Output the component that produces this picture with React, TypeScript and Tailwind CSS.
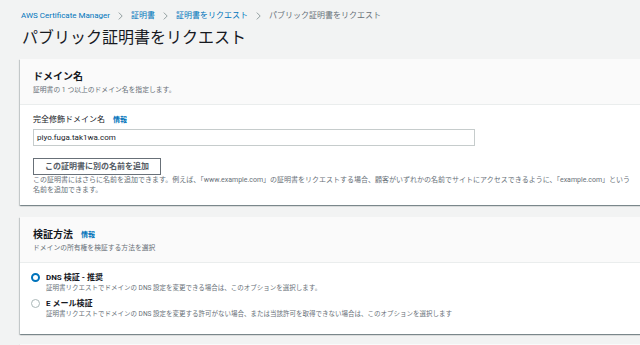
const font = { fontFamily: '"Roboto", "Noto Sans CJK JP", sans-serif' };

const cardShadow =
  "shadow-[0_1px_1px_0_rgba(0,28,36,0.3),1px_1px_1px_0_rgba(0,28,36,0.15),-1px_1px_1px_0_rgba(0,28,36,0.15)]";

function Chevron() {
  return (
    <svg width="5" height="8" viewBox="0 0 5 8" className="shrink-0">
      <path d="M0.8 0.6 L4.2 4 L0.8 7.4" fill="none" stroke="#879596" strokeWidth="0.9" />
    </svg>
  );
}

function Info() {
  return <span className="ml-[8px] text-[7px] font-bold text-[#0073bb]">情報</span>;
}

function CardHeader({ title, desc, info }: { title: string; desc: string; info?: boolean }) {
  return (
    <div className="bg-[#fafafa] border-b border-[#eaeded] px-[13px] pt-[11px] pb-[9px]">
      <div className="flex items-center h-[14px]">
        <h2 className="text-[10px] font-bold text-[#16191f] leading-[14px]">{title}</h2>
        {info && <Info />}
      </div>
      <p className="text-[6.8px] leading-[10px] text-[#687078] mt-[1px]">{desc}</p>
    </div>
  );
}

function Radio({ checked, label, desc }: { checked?: boolean; label: string; desc: string }) {
  return (
    <div className="flex items-start gap-[6px]">
      <span
        className={`mt-[1px] w-[9px] h-[9px] rounded-full shrink-0 bg-white ${
          checked ? "border-[2.5px] border-[#0073bb]" : "border border-[#aab7b8]"
        }`}
      />
      <div>
        <p className="text-[8px] font-bold leading-[11px] text-[#16191f]">{label}</p>
        <p className="text-[6.5px] leading-[10px] text-[#687078]">{desc}</p>
      </div>
    </div>
  );
}

export default function App() {
  return (
    <div className="h-screen overflow-hidden bg-[#f2f3f3] flex" style={font}>
      <main className="flex-1 pl-[20px] pr-[1px]">
        {/* Breadcrumb */}
        <nav className="pt-[10px] flex items-center gap-[8px] h-[22px] pl-[1px] text-[8px] leading-[12px]">
          <span className="text-[#0073bb]">AWS Certificate Manager</span>
          <Chevron />
          <span className="text-[#0073bb]">証明書</span>
          <Chevron />
          <span className="text-[#0073bb]">証明書をリクエスト</span>
          <Chevron />
          <span className="text-[#687078]">パブリック証明書をリクエスト</span>
        </nav>
        <h1 className="mt-[6px] pl-[2px] text-[16px] leading-[20px] text-[#16191f]">
          パブリック証明書をリクエスト
        </h1>

        {/* Domain name */}
        <section className={`mt-[11px] bg-white ${cardShadow}`}>
          <CardHeader title="ドメイン名" desc="証明書の 1 つ以上のドメイン名を指定します。" />
          <div className="px-[13px] pt-[9px] pb-[10px]">
            <div className="flex items-center h-[12px]">
              <label className="text-[8px] leading-[12px] text-[#16191f]">完全修飾ドメイン名</label>
              <Info />
            </div>
            <div className="mt-[3px] w-[442px] h-[17px] border border-[#c6cccc] flex items-center pl-[3px] text-[8px] text-[#16191f]">
              piyo.fuga.tak1wa.com
            </div>
            <button className="mt-[12px] w-[128px] h-[17px] border border-[#687078] bg-white text-[8px] font-bold text-[#545b64] flex items-center justify-center">
              この証明書に別の名前を追加
            </button>
            <p className="mt-[1px] text-[7px] leading-[9.5px] text-[#687078]">
              <span className="whitespace-nowrap">
                この証明書にはさらに名前を追加できます。例えば、「www.example.com」の証明書をリクエストする場合、顧客がいずれかの名前でサイトにアクセスできるように、「example.com」という
              </span>
              <br />
              名前を追加できます。
            </p>
          </div>
        </section>

        {/* Validation method */}
        <section className={`mt-[12px] bg-white ${cardShadow}`}>
          <CardHeader title="検証方法" desc="ドメインの所有権を検証する方法を選択" info />
          <div className="px-[13px] pt-[9px] pb-[15px] flex flex-col gap-[5px] pl-[11px]">
            <Radio
              checked
              label="DNS 検証 - 推奨"
              desc="証明書リクエストでドメインの DNS 設定を変更できる場合は、このオプションを選択します。"
            />
            <Radio
              label="E メール検証"
              desc="証明書リクエストでドメインの DNS 設定を変更する許可がない場合、または当該許可を取得できない場合は、このオプションを選択します"
            />
          </div>
        </section>

        <section className={`mt-[10px] h-[40px] bg-[#fafafa] ${cardShadow}`} />
      </main>
      <aside className="w-[3px] bg-[#e6e9e9]" />
    </div>
  );
}
